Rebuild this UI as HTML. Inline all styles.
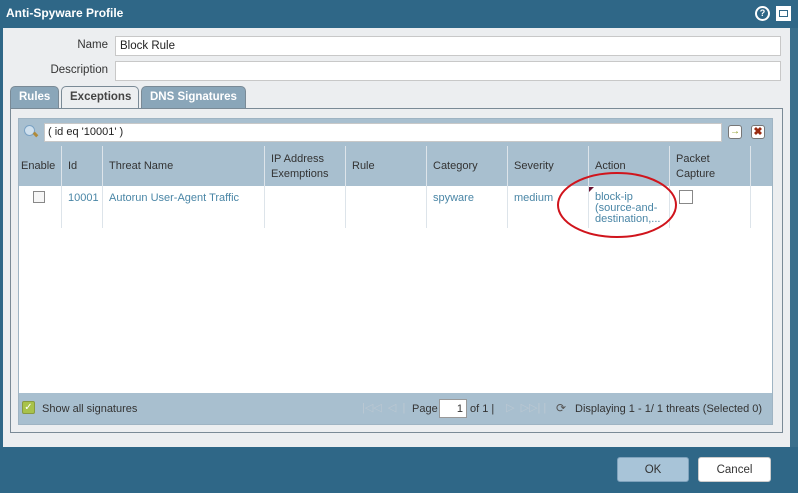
<!DOCTYPE html>
<html><head><style>
*{margin:0;padding:0;box-sizing:border-box}
body{width:798px;height:493px;background:#2f6787;font-family:"Liberation Sans",sans-serif;font-size:11px;color:#333;position:relative;overflow:hidden}
.a{position:absolute}
.title{left:6px;top:6px;color:#fff;font-weight:bold;font-size:12px}
.panel{left:3px;top:28px;width:787px;height:419px;background:#eceef0}
.inp{background:#fff;border:1px solid #c8c8c8;height:20px;padding:3px 4px;font-size:11.5px;color:#222}
.lbl{font-size:11.5px;color:#333;text-align:right}
.tab{top:86px;height:23px;border:1px solid #7a8a96;border-bottom:none;border-radius:5px 5px 0 0;font-weight:bold;font-size:11.5px;padding:4px 8px;background:#8aa6b9;color:#fff}
.tab.sel{background:#eceef0;color:#444;height:24px}
.tabpanel{left:10px;top:108px;width:773px;height:325px;border:1px solid #7a8a96;background:#eceef0}
.grid{left:18px;top:118px;width:755px;height:307px;background:#fff;border:1px solid #9fb4c3}
.bar{background:#a8bfcf}
.hd{top:146px;height:40px;background:#a8bfcf}
.col{top:146px;height:82px;border-left:1px solid #dde4ea}
.ht{top:160px;font-size:11px;color:#333}
.dt{top:192px;font-size:11px;color:#4a86a6}
.cb{width:12px;height:12px;border:1px solid #888;background:#f6f6f6}
.btn{top:457px;height:25px;border-radius:3px;text-align:center;font-size:11.5px;padding-top:6px}
</style></head><body>
<div class="a title">Anti-Spyware Profile</div>
<div class="a" style="left:755px;top:6px;width:15px;height:15px;border-radius:50%;background:#fff;"><div style="position:absolute;left:2px;top:2px;width:11px;height:11px;border-radius:50%;background:#2f6787;color:#fff;font-size:9px;font-weight:bold;text-align:center;line-height:11px">?</div></div>
<div class="a" style="left:776px;top:6px;width:15px;height:15px;background:#fff;"><div style="position:absolute;left:3px;top:4px;width:9px;height:7px;border:1px solid #2f6787"></div></div>
<div class="a panel"></div>
<div class="a" style="left:790px;top:28px;width:8px;height:419px;background:#3a6f8c"></div>
<div class="a lbl" style="left:40px;top:39px;width:68px">Name</div>
<div class="a inp" style="left:115px;top:36px;width:666px">Block Rule</div>
<div class="a lbl" style="left:20px;top:64px;width:88px">Description</div>
<div class="a inp" style="left:115px;top:61px;width:666px"></div>
<div class="a tab" style="left:10px;width:49px">Rules</div>
<div class="a tab sel" style="left:61px;width:78px">Exceptions</div>
<div class="a tab" style="left:141px;width:105px">DNS Signatures</div>
<div class="a tabpanel"></div>
<div class="a grid"></div>
<div class="a bar" style="left:19px;top:119px;width:753px;height:27px"></div>
<div class="a" style="left:24px;top:125px;width:11px;height:11px;border-radius:50%;background:#cfe0ee;border:1px solid #7aa2c4"></div>
<div class="a" style="left:33px;top:133px;width:5px;height:3px;background:#b08a3a;transform:rotate(45deg)"></div>
<div class="a inp" style="left:44px;top:123px;width:678px;height:19px;font-size:11px;padding:2px 3px">( id eq '10001' )</div>
<div class="a" style="left:728px;top:125px;width:14px;height:14px;border:1px solid #777;border-radius:3px;background:#fff;color:#8a9a20;font-size:10px;font-weight:bold;text-align:center;line-height:12px">→</div>
<div class="a" style="left:751px;top:125px;width:14px;height:14px;border:1px solid #777;border-radius:3px;background:#fff;color:#9a2a10;font-size:11px;font-weight:bold;text-align:center;line-height:12px">✖</div>
<div class="a hd" style="left:19px;width:753px"></div>
<div class="a col" style="left:61px"></div><div class="a col" style="left:102px"></div><div class="a col" style="left:264px"></div><div class="a col" style="left:345px"></div><div class="a col" style="left:426px"></div><div class="a col" style="left:507px"></div><div class="a col" style="left:588px"></div><div class="a col" style="left:669px"></div><div class="a col" style="left:750px"></div>
<div class="a ht" style="left:21px">Enable</div>
<div class="a ht" style="left:68px">Id</div>
<div class="a ht" style="left:109px">Threat Name</div>
<div class="a ht" style="left:271px;top:152px;line-height:15px">IP Address<br>Exemptions</div>
<div class="a ht" style="left:352px">Rule</div>
<div class="a ht" style="left:433px">Category</div>
<div class="a ht" style="left:514px">Severity</div>
<div class="a ht" style="left:595px">Action</div>
<div class="a ht" style="left:676px;top:152px;line-height:15px">Packet<br>Capture</div>
<div class="a cb" style="left:33px;top:191px"></div>
<div class="a dt" style="left:68px">10001</div>
<div class="a dt" style="left:109px">Autorun User-Agent Traffic</div>
<div class="a dt" style="left:433px">spyware</div>
<div class="a dt" style="left:514px">medium</div>
<div class="a" style="left:589px;top:187px;width:0;height:0;border-top:5px solid #6a1030;border-right:5px solid transparent"></div>
<div class="a dt" style="left:595px;line-height:11px">block-ip<br>(source-and-<br>destination,...</div>
<div class="a cb" style="left:679px;top:190px;width:14px;height:14px;background:#fff"></div>
<svg class="a" style="left:555px;top:168px" width="130" height="74"><ellipse cx="62" cy="37" rx="59" ry="32" fill="none" stroke="#d0141c" stroke-width="2"/></svg>
<div class="a bar" style="left:19px;top:393px;width:753px;height:31px"></div>
<div class="a" style="left:22px;top:401px;width:13px;height:13px;background:#a8c24a;border:1px solid #889a40;border-radius:2px;color:#fff;font-size:10px;line-height:11px;text-align:center">✓</div>
<div class="a" style="left:42px;top:403px;font-size:11px">Show all signatures</div>
<div class="a" style="left:362px;top:401px;color:#bbc8d2;font-size:11px">|◁◁ &nbsp;◁ &nbsp;|</div>
<div class="a" style="left:412px;top:403px;font-size:11px">Page</div>
<div class="a" style="left:439px;top:399px;width:28px;height:19px;background:#fff;border:1px solid #999;text-align:right;padding:3px 3px;font-size:11px">1</div>
<div class="a" style="left:470px;top:403px;font-size:11px">of 1 |</div>
<div class="a" style="left:506px;top:401px;color:#bbc8d2;font-size:11px">▷ &nbsp;▷▷| |</div>
<div class="a" style="left:556px;top:401px;color:#555;font-size:12px">⟳</div>
<div class="a" style="left:575px;top:403px;font-size:11px">Displaying 1 - 1/ 1 threats (Selected 0)</div>
<div class="a btn" style="left:617px;width:72px;background:#a8c4d8;border:1px solid #7fa2bc;color:#333">OK</div>
<div class="a btn" style="left:698px;width:73px;background:#fff;border:1px solid #ccc;color:#333">Cancel</div>
</body></html>
